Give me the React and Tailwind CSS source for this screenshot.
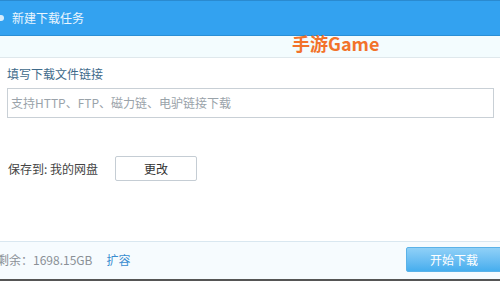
import React from "react";

const font = { fontFamily: '"Noto Sans CJK SC", "Liberation Sans", sans-serif' };

const App = () => {
  return (
    <div className="w-[500px] h-[281px] bg-white flex flex-col overflow-hidden" style={font}>
      {/* title bar */}
      <div className="h-[36px] bg-[#33a2f0] border-t border-t-[#2a8ad0] border-b border-b-[#2a8fd5] flex items-center">
        <span className="w-[4px] h-[6px] rounded-r-full bg-white/80 mr-[8px]"></span>
        <span className="text-[12px] text-white/90">新建下载任务</span>
      </div>
      <div className="h-[22px] bg-[#f3fcfe] border-b border-[#dfe8ec] flex items-start pl-[292px]">
        <span className="-mt-[3px] text-[18px] leading-[20px] font-bold text-[#f2722a]">手游Game</span>
      </div>

      {/* body */}
      <div className="flex-1 flex flex-col px-[7px]">
        <div className="mt-[8px] text-[12px] leading-[16px] text-[#3e6a8a]">填写下载文件链接</div>
        <div className="mt-[6px] w-[487px] h-[30px] border border-[#c9d0d6] flex items-center px-[3px]">
          <span className="text-[12px] text-[#9aa3aa]">支持HTTP、FTP、磁力链、电驴链接下载</span>
        </div>
        <div className="mt-[38px] flex items-center">
          <span className="text-[12px] text-[#444] w-[108px] pl-[1px]">保存到: 我的网盘</span>
          <div className="w-[82px] h-[25px] border border-[#c5cdd4] rounded-[2px] bg-white flex items-center justify-center text-[12px] text-[#333]">
            更改
          </div>
        </div>
      </div>

      {/* footer */}
      <div className="h-[40px] bg-[#f6fbfe] border-t border-[#d9e7f0] flex items-center justify-between pb-[2px] border-b-2 border-b-[#555]">
        <div className="flex items-center text-[12px] -ml-[3px]">
          <span className="text-[#8a9096]">剩余：1698.15GB</span>
          <span className="ml-[14px] text-[#3a8dd0]">扩容</span>
        </div>
        <div className="w-[96px] h-[25px] mr-[-2px] rounded-[2px] border border-[#5ab2e8] bg-gradient-to-b from-[#8fd0f7] to-[#45aeee] flex items-center justify-center text-[12px] text-white">
          开始下载
        </div>
      </div>
    </div>
  );
};

export default App;
